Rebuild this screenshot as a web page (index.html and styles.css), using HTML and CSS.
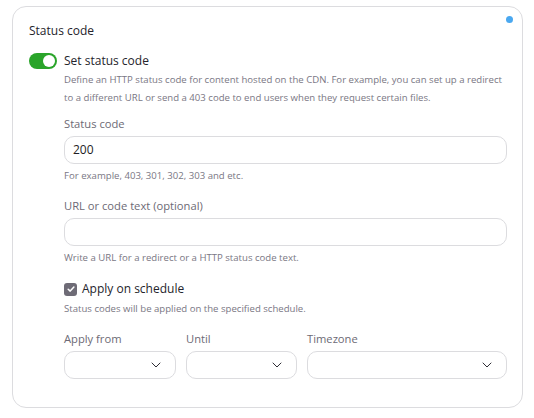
FILE: index.html
```html
<!DOCTYPE html>
<html lang="en">
<head>
    <meta charset="UTF-8">
    <meta name="viewport" content="width=device-width, initial-scale=1.0">
    <title>Status code</title>
    <link rel="stylesheet" href="styles.css">
</head>
<body>
    <div class="card">
        <span class="dot"></span>
        <h2 class="card-title">Status code</h2>

        <div class="switch-row">
            <span class="switch"><span class="knob"></span></span>
            <span class="switch-label">Set status code</span>
        </div>

        <div class="section">
            <p class="desc">Define an HTTP status code for content hosted on the CDN. For example, you can set up a redirect to a different URL or send a 403 code to end users when they request certain files.</p>

            <div class="field">
                <label class="field-label">Status code</label>
                <div class="input">200</div>
                <div class="hint">For example, 403, 301, 302, 303 and etc.</div>
            </div>

            <div class="field">
                <label class="field-label">URL or code text (optional)</label>
                <div class="input"></div>
                <div class="hint">Write a URL for a redirect or a HTTP status code text.</div>
            </div>

            <div class="check-row">
                <span class="checkbox">
                    <svg width="10" height="10" viewBox="0 0 10 10"><path d="M2.2 5.2 L4.2 7.1 L7.9 3" fill="none" stroke="#fff" stroke-width="1.5" stroke-linecap="round" stroke-linejoin="round"/></svg>
                </span>
                <span class="check-label">Apply on schedule</span>
            </div>
            <div class="hint check-hint">Status codes will be applied on the specified schedule.</div>

            <div class="schedule">
                <div class="field">
                    <label class="field-label">Apply from</label>
                    <div class="select"><svg width="10" height="6" viewBox="0 0 10 6"><path d="M1 1 L5 5 L9 1" fill="none" stroke="#2f2e36" stroke-width="1" stroke-linecap="round" stroke-linejoin="round"/></svg></div>
                </div>
                <div class="field">
                    <label class="field-label">Until</label>
                    <div class="select"><svg width="10" height="6" viewBox="0 0 10 6"><path d="M1 1 L5 5 L9 1" fill="none" stroke="#2f2e36" stroke-width="1" stroke-linecap="round" stroke-linejoin="round"/></svg></div>
                </div>
                <div class="field">
                    <label class="field-label">Timezone</label>
                    <div class="select"><svg width="10" height="6" viewBox="0 0 10 6"><path d="M1 1 L5 5 L9 1" fill="none" stroke="#2f2e36" stroke-width="1" stroke-linecap="round" stroke-linejoin="round"/></svg></div>
                </div>
            </div>
        </div>
    </div>
</body>
</html>
```

FILE: styles.css
```css
body {
    margin: 0;
    padding: 6px 11px 10px 12px;
    background: #ffffff;
    font-family: "Open Sans", "Noto Sans", sans-serif;
    color: #2b2a33;
}
.card {
    position: relative;
    border: 1px solid #dcdcdf;
    border-radius: 14px;
    padding: 15px 15px 28px 16px;
}
.dot {
    position: absolute;
    top: 9px;
    right: 9px;
    width: 7px;
    height: 7px;
    border-radius: 50%;
    background: #4aa8f0;
}
.card-title {
    margin: 0 0 12px;
    font-size: 12px;
    font-weight: 500;
    line-height: 18px;
    color: #25242c;
}
.switch-row {
    display: flex;
    align-items: center;
    gap: 7px;
    height: 18px;
}
.switch {
    position: relative;
    width: 28px;
    height: 16px;
    border-radius: 8px;
    background: #2aa42a;
}
.knob {
    position: absolute;
    top: 2px;
    right: 2px;
    width: 12px;
    height: 12px;
    border-radius: 50%;
    background: #fff;
}
.switch-label, .check-label {
    font-size: 12px;
    line-height: 18px;
    color: #25242c;
}
.section {
    padding-left: 35px;
}
.desc {
    margin: 1px 0 9px;
    font-size: 9.6px;
    line-height: 18px;
    color: #7a7784;
}
.field {
    display: flex;
    flex-direction: column;
}
.field-label {
    font-size: 11.2px;
    line-height: 16px;
    color: #6d6a75;
    margin-bottom: 4px;
}
.input {
    height: 26px;
    border: 1px solid #dcdcdf;
    border-radius: 10px;
    padding: 0 8px;
    font-size: 12px;
    line-height: 26px;
    color: #1e1d24;
}
.hint {
    font-size: 9.6px;
    line-height: 14px;
    color: #7a7784;
    margin: 5px 0 15px;
}
.check-row {
    display: flex;
    align-items: center;
    gap: 5px;
    height: 18px;
}
.checkbox {
    width: 13px;
    height: 13px;
    border-radius: 3px;
    background: #6e6b76;
    display: flex;
    align-items: center;
    justify-content: center;
}
.check-hint {
    margin: 4px 0 15px;
}
.schedule {
    display: grid;
    grid-template-columns: 112px 111px 1fr;
    gap: 10px;
}
.select {
    height: 26px;
    border: 1px solid #dcdcdf;
    border-radius: 10px;
    display: flex;
    align-items: center;
    justify-content: flex-end;
    padding-right: 14px;
}
```
